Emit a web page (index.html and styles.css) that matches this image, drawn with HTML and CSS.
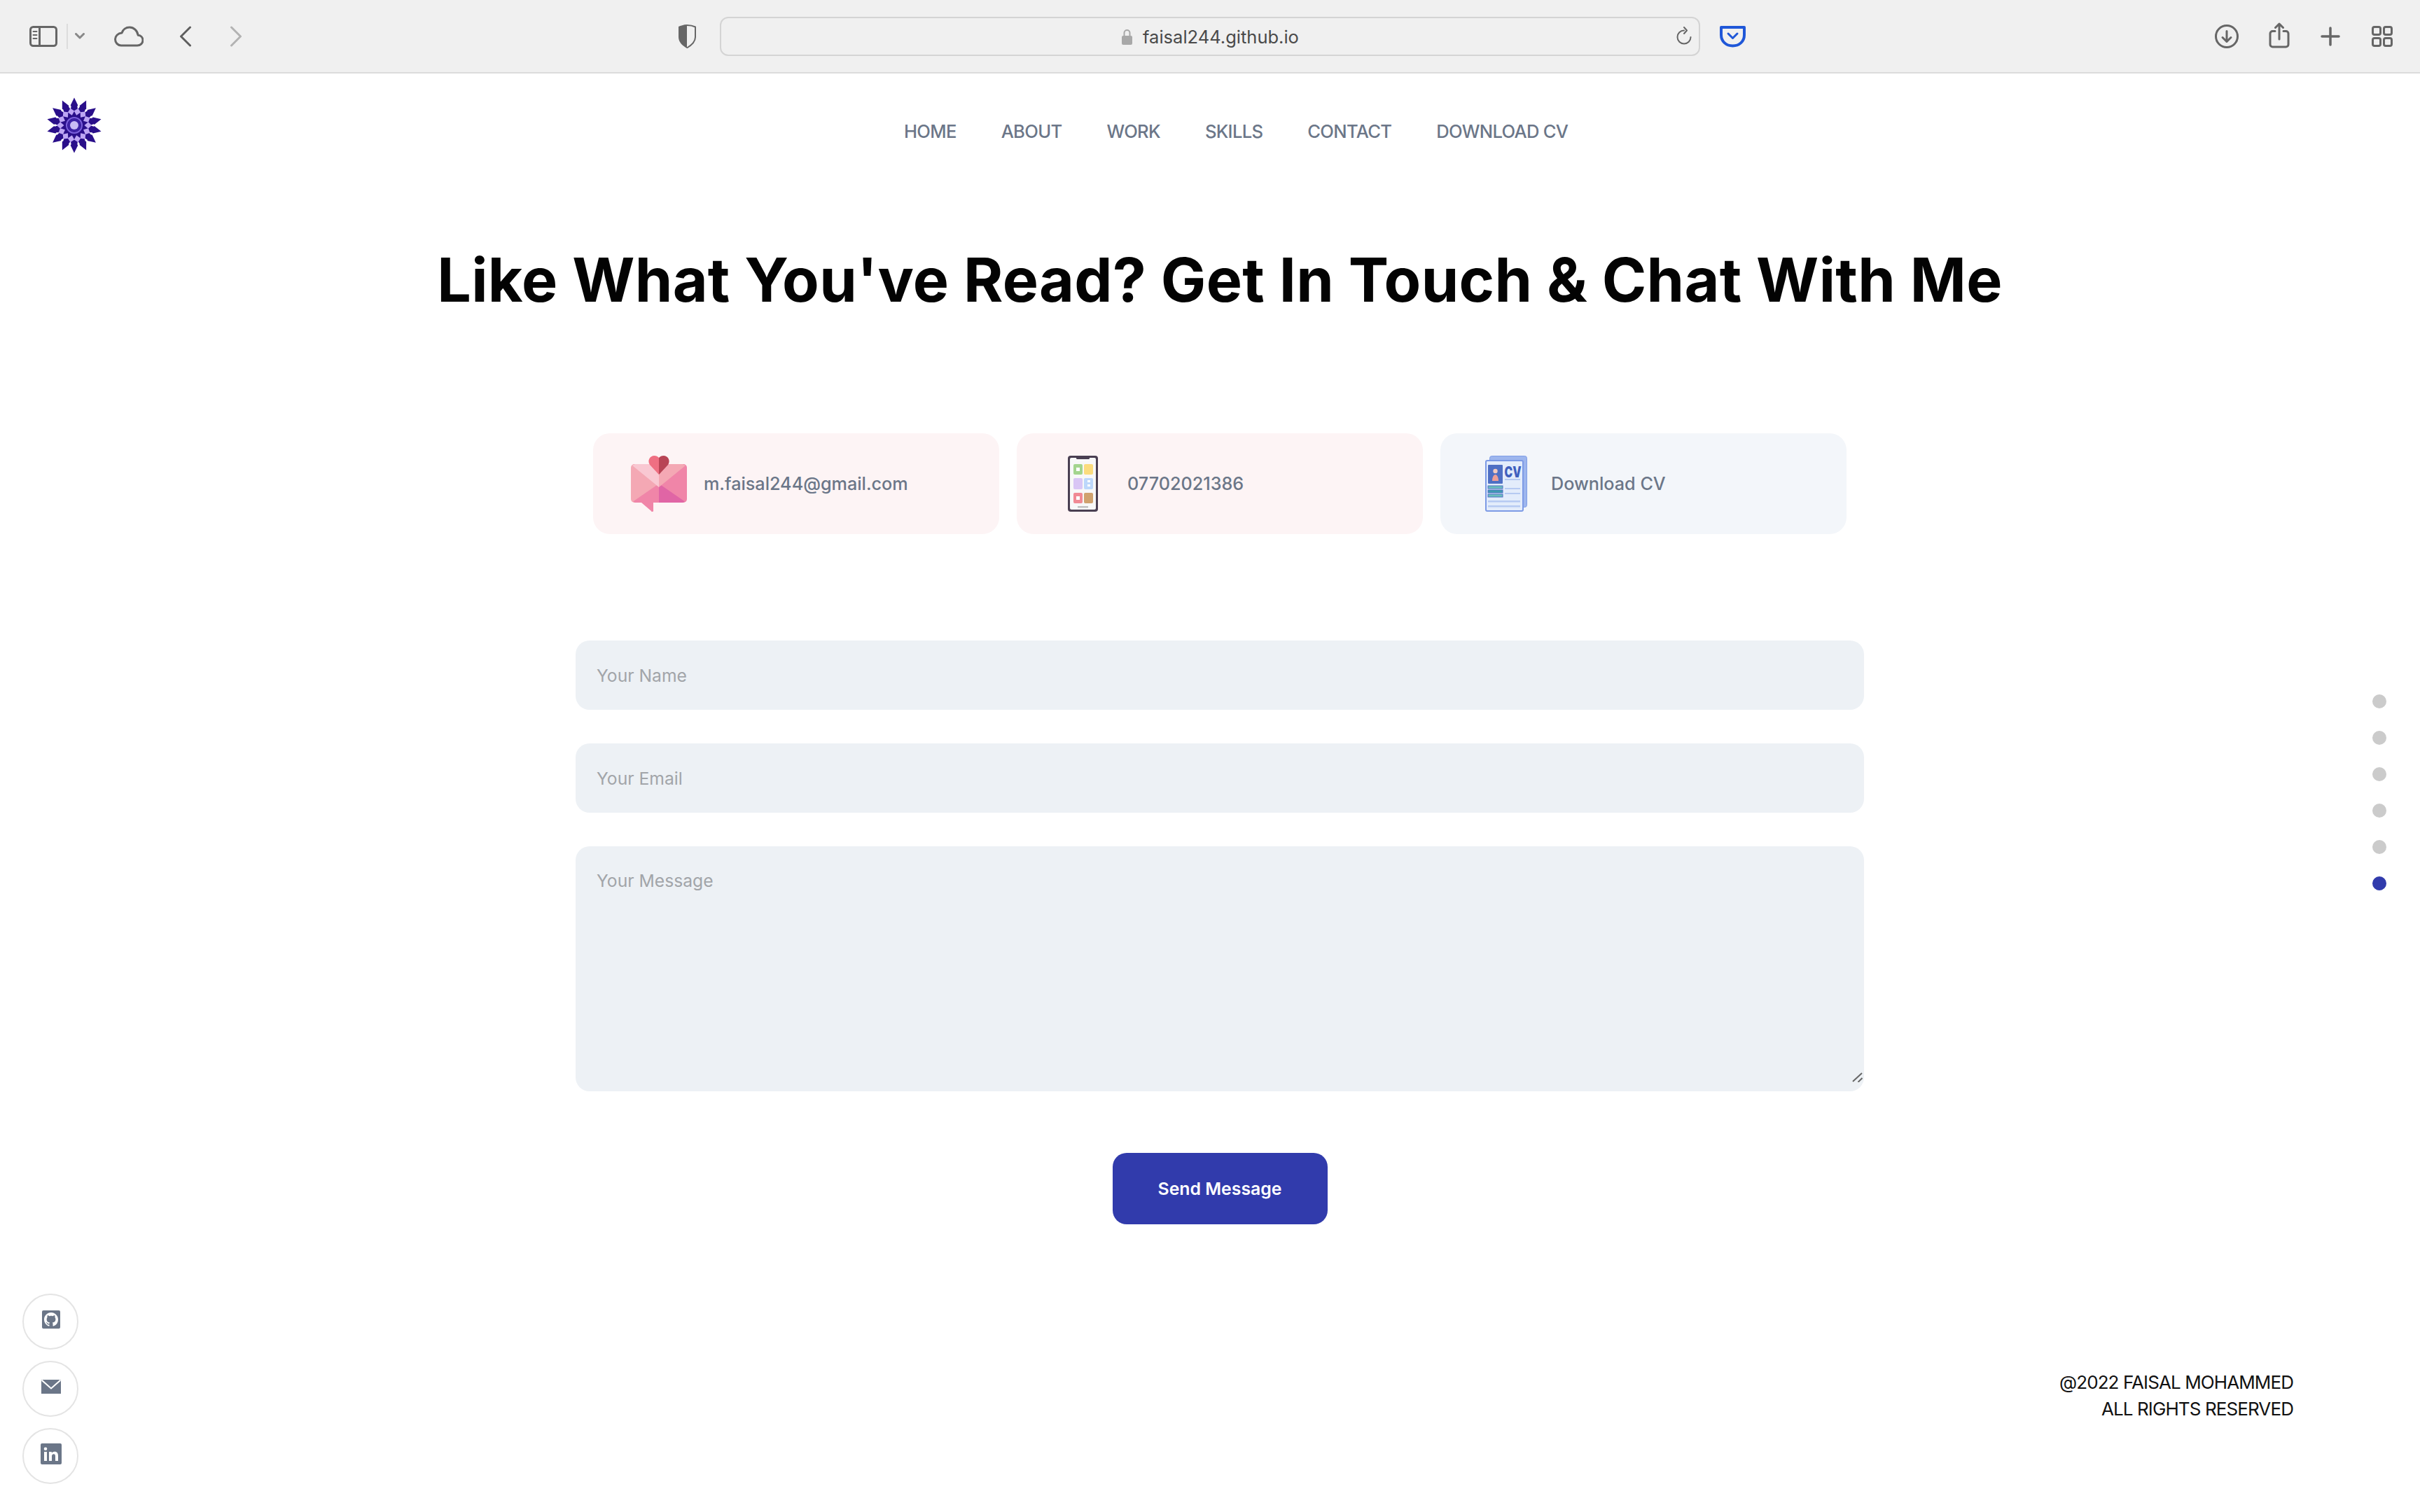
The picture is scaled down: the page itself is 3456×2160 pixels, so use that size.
FILE: index.html
```html
<!DOCTYPE html>
<html lang="en">
<head>
<meta charset="utf-8">
<title>faisal244.github.io</title>
<link rel="stylesheet" href="styles.css">
</head>
<body>
<header class="toolbar">
  <div class="tb-left">
    <svg class="ic ic-sidebar" viewBox="0 0 40 30"><rect x="1.500" y="1.500" width="37" height="27" rx="4"/><path d="M14.500 2v26"/><path class="ic-thin" d="M5.500 8h5M5.500 13h5M5.500 18h5"/></svg>
    <span class="tb-sep"></span>
    <svg class="ic ic-chev" viewBox="0 0 14 9"><path d="M1.500 1.500L7 7l5.500-5.500"/></svg>
    <svg class="ic ic-cloud" viewBox="0 0 42 30"><path d="M10 28h23c4.500 0 8-3.300 8-7.500 0-4-3-7-6.800-7.300C33 6.500 28 2 22 2c-5.200 0-9.500 3.200-11 8C5.500 10.500 1.500 14.500 1.500 19c0 5 3.800 9 8.500 9z"/></svg>
    <svg class="ic ic-back" viewBox="0 0 18 30"><path d="M15.500 2L2.500 15l13 13"/></svg>
    <svg class="ic ic-fwd" viewBox="0 0 18 30"><path d="M2.500 2l13 13-13 13"/></svg>
  </div>
  <div class="tb-center">
    <svg class="ic-shield" viewBox="0 0 28 36"><path class="s-fill" d="M14 1C9 1 5 3 2 4v15c0 8 7 13 12 16z"/><path class="s-line" d="M14 2c5 0 9 1 12 2.500V19c0 8-7 12.500-12 15.500"/></svg>
    <div class="urlbar">
      <span class="url"><svg class="ic-lock" viewBox="0 0 17 23"><path class="l-arc" d="M4.500 11V6a4 4 0 018 0v5"/><rect x="1" y="10" width="15" height="13" rx="2"/></svg>faisal244.github.io</span>
      <svg class="ic ic-reload" viewBox="0 0 23 26"><path d="M12 5.500a9.500 9.500 0 109.500 9.500M12 1l4 4.500-4 4.500"/></svg>
    </div>
    <svg class="ic-pocket" viewBox="0 0 39 32"><path d="M3 3h33v11c0 9-7 15.500-16.500 15.500S3 23 3 14z"/><path class="p-v" d="M13 12l6.500 6.500L26 12"/></svg>
  </div>
  <div class="tb-right">
    <svg class="ic ic-dl" viewBox="0 0 34 34"><circle cx="17" cy="17" r="15.500"/><path d="M17 9.500v15M11 18.500l6 6 6-6"/></svg>
    <svg class="ic ic-share" viewBox="0 0 30 37"><path d="M9 12.500H5.500A3.500 3.500 0 002 16v15.500A3.500 3.500 0 005.500 35h19a3.500 3.500 0 003.500-3.500V16a3.500 3.500 0 00-3.500-3.500H21M15 24V2M9.500 7.500L15 2l5.500 5.500"/></svg>
    <svg class="ic ic-plus" viewBox="0 0 28 28"><path d="M14 2v24M2 14h24"/></svg>
    <svg class="ic ic-tabs" viewBox="0 0 30 30"><rect x="1.500" y="1.500" width="11" height="11" rx="2.500"/><rect x="17.500" y="1.500" width="11" height="11" rx="2.500"/><rect x="1.500" y="17.500" width="11" height="11" rx="2.500"/><rect x="17.500" y="17.500" width="11" height="11" rx="2.500"/></svg>
  </div>
</header>

<main class="page">
  <nav class="nav">
    <svg class="logo" viewBox="-40 -40 80 80" aria-label="logo">
      <defs>
        <polygon id="spike" points="0,-39.500 -9,-21 0,-10 9,-21"/>
        <polygon id="diamond" points="0,-25 -4.800,-20 0,-14.500 4.800,-20"/>
        <polygon id="chip" points="0,-31 -1.800,-27.500 0,-23 1.800,-27.500"/>
      </defs>
      <g class="lg-dark">
        <use href="#spike"/><use href="#spike" transform="rotate(25.710)"/><use href="#spike" transform="rotate(51.430)"/><use href="#spike" transform="rotate(77.140)"/><use href="#spike" transform="rotate(102.860)"/><use href="#spike" transform="rotate(128.570)"/><use href="#spike" transform="rotate(154.290)"/><use href="#spike" transform="rotate(180)"/><use href="#spike" transform="rotate(205.710)"/><use href="#spike" transform="rotate(231.430)"/><use href="#spike" transform="rotate(257.140)"/><use href="#spike" transform="rotate(282.860)"/><use href="#spike" transform="rotate(308.570)"/><use href="#spike" transform="rotate(334.290)"/>
      </g>
      <circle class="lg-dark" r="23"/>
      <g class="lg-white">
        <use href="#chip" transform="rotate(12.860)"/><use href="#chip" transform="rotate(38.570)"/><use href="#chip" transform="rotate(64.290)"/><use href="#chip" transform="rotate(90)"/><use href="#chip" transform="rotate(115.710)"/><use href="#chip" transform="rotate(141.430)"/><use href="#chip" transform="rotate(167.140)"/><use href="#chip" transform="rotate(192.860)"/><use href="#chip" transform="rotate(218.570)"/><use href="#chip" transform="rotate(244.290)"/><use href="#chip" transform="rotate(270)"/><use href="#chip" transform="rotate(295.710)"/><use href="#chip" transform="rotate(321.430)"/><use href="#chip" transform="rotate(347.140)"/>
      </g>
      <g class="lg-light">
        <use href="#diamond" transform="rotate(12.860)"/><use href="#diamond" transform="rotate(38.570)"/><use href="#diamond" transform="rotate(64.290)"/><use href="#diamond" transform="rotate(90)"/><use href="#diamond" transform="rotate(115.710)"/><use href="#diamond" transform="rotate(141.430)"/><use href="#diamond" transform="rotate(167.140)"/><use href="#diamond" transform="rotate(192.860)"/><use href="#diamond" transform="rotate(218.570)"/><use href="#diamond" transform="rotate(244.290)"/><use href="#diamond" transform="rotate(270)"/><use href="#diamond" transform="rotate(295.710)"/><use href="#diamond" transform="rotate(321.430)"/><use href="#diamond" transform="rotate(347.140)"/>
      </g>
      <circle class="lg-dark" r="14"/>
      <circle class="lg-ring" r="11"/>
      <circle class="lg-mid" r="9.500"/>
      <circle class="lg-dots" r="6"/>
    </svg>
    <ul class="nav-links">
      <li>HOME</li><li>ABOUT</li><li>WORK</li><li>SKILLS</li><li>CONTACT</li><li>DOWNLOAD CV</li>
    </ul>
  </nav>

  <h1 class="title">Like What You've Read? Get In Touch &amp; Chat With Me</h1>

  <section class="cards">
    <div class="card card-pink">
      <svg class="card-ic" viewBox="0 0 80 80">
        <path fill="#f4a8b4" d="M5 12h35v55H5a5 5 0 01-5-5V17a5 5 0 015-5z"/>
        <path fill="#f085a8" d="M40 12h35a5 5 0 015 5v45a5 5 0 01-5 5H40z"/>
        <path fill="#f085a8" d="M40 40L3 65.500 6 67h34z"/>
        <path fill="#e065a5" d="M40 40l37 25.500L74 67H40z"/>
        <path fill="#f9c8d2" d="M6 12h34v33L2 14z"/>
        <path fill="#f4a8b4" d="M40 12h34l4 2-38 31z"/>
        <path fill="#f085a8" d="M15 67h17v11a1.500 1.500 0 01-3 1z"/>
        <path fill="#ef6f82" d="M40 27L27 13c-4-6 0-13 6.500-13C36 0 38.500 1 40 3z"/>
        <path fill="#b84455" d="M40 27l13-14c4-6 0-13-6.500-13C44 0 41.500 1 40 3z"/>
      </svg>
      <span>m.faisal244@gmail.com</span>
    </div>
    <div class="card card-pink">
      <svg class="card-ic" viewBox="0 0 80 80">
        <rect x="19" y="0" width="43" height="80" rx="4" fill="#4a3f52"/>
        <rect x="22" y="3" width="37" height="74" rx="2" fill="#f8f8f8"/>
        <rect x="31" y="0" width="19" height="5" rx="1.500" fill="#4a3f52"/>
        <rect x="27" y="12" width="13" height="15" rx="2" fill="#a3d58e"/>
        <rect x="42" y="12" width="13" height="15" rx="2" fill="#fbdc7e"/>
        <rect x="27" y="32" width="13" height="16" rx="2" fill="#d9c6f5"/>
        <rect x="42" y="32" width="13" height="16" rx="2" fill="#bcd7fb"/>
        <rect x="27" y="53" width="13" height="15" rx="2" fill="#f08a94"/>
        <rect x="42" y="53" width="13" height="15" rx="2" fill="#d0a26e"/>
        <rect x="31" y="17" width="5" height="5" fill="#fff"/>
        <rect x="47" y="35" width="4" height="3" fill="#fff"/>
        <rect x="47" y="41" width="4" height="3" fill="#fff"/>
        <rect x="31" y="58" width="5" height="5" fill="#fff"/>
        <rect x="33" y="72" width="15" height="2.500" fill="#c0c0c0"/>
      </svg>
      <span>07702021386</span>
    </div>
    <div class="card card-blue">
      <svg class="card-ic" viewBox="0 0 80 80">
        <rect x="16.500" y="0.500" width="53" height="73" rx="3" fill="#9db6ee" stroke="#7f9de6"/>
        <rect x="11" y="7" width="53" height="72" rx="2" fill="#e3ecfb" stroke="#7c9ae5" stroke-width="2"/>
        <rect x="14" y="13" width="21" height="27" rx="1" fill="#4f6fc4"/>
        <circle cx="24.500" cy="22" r="3.200" fill="#f2c9bf"/>
        <path d="M20 36c0-5 2-9 4.500-9S29 31 29 36z" fill="#ee9e97"/>
        <text class="cv-mark" x="37.500" y="31" textLength="24" lengthAdjust="spacingAndGlyphs">CV</text>
        <rect x="38" y="33" width="22" height="2" fill="#b6caf2"/>
        <rect x="14" y="43" width="21" height="4" fill="#6bc0bc" stroke="#4f6fc4"/>
        <rect x="14" y="49" width="21" height="4" fill="#3f9bb0" stroke="#4f6fc4"/>
        <rect x="14" y="55" width="21" height="4" fill="#6bc0bc" stroke="#4f6fc4"/>
        <rect x="38" y="46" width="22" height="2" fill="#b6caf2"/>
        <rect x="38" y="53" width="22" height="2" fill="#b6caf2"/>
        <rect x="14" y="64" width="46" height="2.500" fill="#b6caf2"/>
        <rect x="14" y="71" width="46" height="2.500" fill="#b6caf2"/>
      </svg>
      <span>Download CV</span>
    </div>
  </section>

  <form class="form">
    <input class="field" type="text" placeholder="Your Name">
    <input class="field" type="email" placeholder="Your Email">
    <div class="area-wrap">
      <textarea class="field field-area" placeholder="Your Message"></textarea>
      <svg class="grip" viewBox="0 0 15 15"><path d="M1 14L14 2M8.500 15L14.500 9"/></svg>
    </div>
    <button class="send" type="button">Send Message</button>
  </form>
</main>

<aside class="social">
  <div class="social-btn"><svg class="so-gh" viewBox="0 0 26 26"><rect width="26" height="26" rx="2" fill="#6b7688"/><path transform="translate(3 3) scale(1.250)" fill="#fff" d="M8 0C3.580 0 0 3.580 0 8c0 3.540 2.290 6.530 5.470 7.590.4.070.55-.17.55-.38 0-.19-.01-.82-.01-1.490-2.010.37-2.530-.49-2.690-.94-.09-.23-.48-.94-.82-1.130-.28-.15-.68-.52-.01-.53.63-.01 1.080.58 1.230.82.72 1.210 1.870.87 2.330.66.07-.52.28-.87.51-1.070-1.780-.2-3.640-.89-3.640-3.950 0-.87.31-1.590.82-2.150-.08-.2-.36-1.020.08-2.120 0 0 .67-.21 2.200.82.64-.18 1.320-.27 2-.27.68 0 1.360.09 2 .27 1.530-1.040 2.200-.82 2.200-.82.44 1.100.16 1.920.08 2.120.51.56.82 1.270.82 2.150 0 3.070-1.870 3.750-3.650 3.950.29.25.54.73.54 1.480 0 1.070-.01 1.930-.01 2.200 0 .21.15.46.55.38A8.013 8.013 0 0016 8c0-4.420-3.580-8-8-8z"/></svg></div>
  <div class="social-btn"><svg class="so-mail" viewBox="0 0 28 20"><rect width="28" height="20" fill="#6b7688"/><path fill="none" stroke="#fff" stroke-width="2" d="M0.500 0.500L14 12.500 27.500 0.500"/></svg></div>
  <div class="social-btn"><svg class="so-in" viewBox="0 0 30 30"><rect width="30" height="30" rx="2" fill="#6b7688"/><path fill="#fff" d="M5 12h4v13H5zM7 5.500a2.300 2.300 0 110 4.600 2.300 2.300 0 010-4.600zM12 12h3.800v1.800c.6-1.100 2-2.100 4-2.100 4.100 0 5.200 2.600 5.200 6.200V25h-4v-6.300c0-1.700-.3-3.400-2.300-3.400s-2.700 1.500-2.700 3.300V25h-4z"/></svg></div>
</aside>

<aside class="dots">
  <span class="dot"></span><span class="dot"></span><span class="dot"></span><span class="dot"></span><span class="dot"></span><span class="dot dot-on"></span>
</aside>

<p class="copy">@2022 FAISAL MOHAMMED<br>ALL RIGHTS RESERVED</p>
</body>
</html>
```
FILE: styles.css
```css
* { box-sizing: border-box; }
html, body { margin: 0; padding: 0; }
body {
  width: 3456px;
  height: 2160px;
  position: relative;
  overflow: hidden;
  background: #fff;
  font-family: "Inter", "Liberation Sans", sans-serif;
}

/* Browser toolbar */
.toolbar {
  height: 105px;
  background: #f0f0f0;
  border-bottom: 2px solid #dcdcdc;
  display: grid;
  grid-template-columns: 1fr auto 1fr;
  align-items: center;
}
.ic { fill: none; stroke: #666; stroke-width: 3; stroke-linecap: round; stroke-linejoin: round; display: block; }
.ic-thin { stroke-width: 2; }
.tb-left { display: flex; align-items: center; padding-left: 42px; }
.ic-sidebar { width: 40px; height: 30px; }
.tb-sep { width: 2px; height: 36px; background: #dcdcdc; margin: 0 10px 0 13px; }
.ic-chev { width: 14px; height: 9px; stroke: #888; }
.ic-cloud { width: 42px; height: 30px; margin-left: 42px; }
.ic-back { width: 18px; height: 30px; margin-left: 51px; stroke: #5f5f5f; }
.ic-fwd { width: 18px; height: 30px; margin-left: 54px; stroke: #b3b3b3; }

.tb-center { display: flex; align-items: center; margin-left: 5px; }
.ic-shield { width: 28px; height: 36px; margin-right: 33px; }
.s-fill { fill: #666; }
.s-line { fill: none; stroke: #666; stroke-width: 2; }
.urlbar {
  width: 1400px;
  height: 56px;
  border: 2px solid #d4d4d4;
  border-radius: 12px;
  position: relative;
  display: flex;
  align-items: center;
  justify-content: center;
}
.url { font: 400 25.500px "Inter", "Liberation Sans", sans-serif; color: #4a4a4a; display: flex; align-items: center; gap: 14px; margin-top: 2px; }
.ic-lock { width: 17px; height: 23px; fill: #a8a8a8; }
.l-arc { fill: none; stroke: #a8a8a8; stroke-width: 2; }
.ic-reload { width: 23px; height: 26px; stroke-width: 2; position: absolute; right: 10px; top: 12px; }
.ic-pocket { width: 39px; height: 32px; margin-left: 27px; fill: none; stroke: #1f57d8; stroke-width: 4; stroke-linecap: round; stroke-linejoin: round; }
.p-v { stroke-width: 3; }

.tb-right { display: flex; align-items: center; justify-content: flex-end; padding-right: 39px; }
.ic-dl { width: 34px; height: 34px; }
.ic-share { width: 30px; height: 37px; margin-left: 43px; margin-bottom: 3px; }
.ic-plus { width: 28px; height: 28px; margin-left: 44px; stroke-width: 3.500; }
.ic-tabs { width: 30px; height: 30px; margin-left: 45px; }

/* Page */
.page { display: flex; flex-direction: column; align-items: center; padding-left: 28px; }
.nav { width: 3456px; margin-left: -28px; display: flex; align-items: flex-start; padding-left: 66px; }
.logo { width: 80px; height: 80px; flex: none; margin-top: 34px; }
.lg-dark { fill: #2a0f8a; }
.lg-light { fill: #bda6f4; }
.lg-white { fill: #fff; }
.lg-ring { fill: none; stroke: #7a5fdc; stroke-width: 2; }
.lg-mid { fill: #3d22a6; }
.lg-dots { fill: #c9bbf4; }
.nav-links { list-style: none; margin: 60px 0 0 1145px; padding: 0; display: flex; gap: 64px; font-size: 25.600px; font-weight: 500; letter-spacing: -0.7px; color: #6b7688; line-height: 46px; }

.title { margin: 126px 0 0; font-size: 86px; line-height: 110px; font-weight: 700; letter-spacing: 0.3px; color: #030303; white-space: nowrap; }

.cards { display: flex; gap: 25px; margin-top: 164px; }
.card { width: 580px; height: 144px; border-radius: 24px; display: flex; align-items: center; gap: 24px; padding-left: 54px; font-size: 25.200px; font-weight: 500; color: #6b7688; }
.card-pink { background: #fdf4f5; }
.card-blue { background: #f3f6fa; }
.card-ic { width: 80px; height: 80px; flex: none; }
.cv-mark { font: 900 21px "Inter", "Liberation Sans", sans-serif; fill: #3f5fbe; }

.form { width: 1840px; display: flex; flex-direction: column; align-items: center; gap: 48px; margin-top: 152px; }
.field {
  display: block;
  width: 100%;
  height: 99px;
  border: 0;
  border-radius: 20px;
  background: #edf1f5;
  padding: 0 30px;
  font: 400 24.700px "Inter", "Liberation Sans", sans-serif;
  color: #333;
  outline: 0;
}
.field::placeholder { color: #a2a5a9; opacity: 1; }
.area-wrap { width: 100%; position: relative; }
.field-area { height: 350px; padding: 34px 30px; resize: none; }
.grip { position: absolute; right: 2px; bottom: 13px; width: 15px; height: 15px; fill: none; stroke: #666; stroke-width: 2; }
.send {
  width: 307px;
  height: 102px;
  margin-top: 40px;
  border: 0;
  border-radius: 20px;
  background: #313bac;
  color: #fff;
  font: 600 24.800px "Inter", "Liberation Sans", sans-serif;
}

/* Fixed overlays */
.social { position: absolute; left: 32px; top: 1848px; display: flex; flex-direction: column; gap: 16px; }
.social-btn { width: 80px; height: 80px; border-radius: 50%; border: 2px solid #e4e4e4; display: flex; align-items: center; justify-content: center; padding: 0 0 6px 2px; }
.so-gh { width: 26px; height: 26px; }
.so-mail { width: 28px; height: 20px; }
.so-in { width: 30px; height: 30px; }
.dots { position: absolute; left: 3388px; top: 992px; display: flex; flex-direction: column; gap: 32px; }
.dot { width: 20px; height: 20px; border-radius: 50%; background: #cbcbcb; }
.dot-on { background: #313bac; }
.copy { position: absolute; right: 181px; top: 1956px; margin: 0; text-align: right; font-size: 26px; letter-spacing: -0.9px; line-height: 38px; color: #111; }
```
